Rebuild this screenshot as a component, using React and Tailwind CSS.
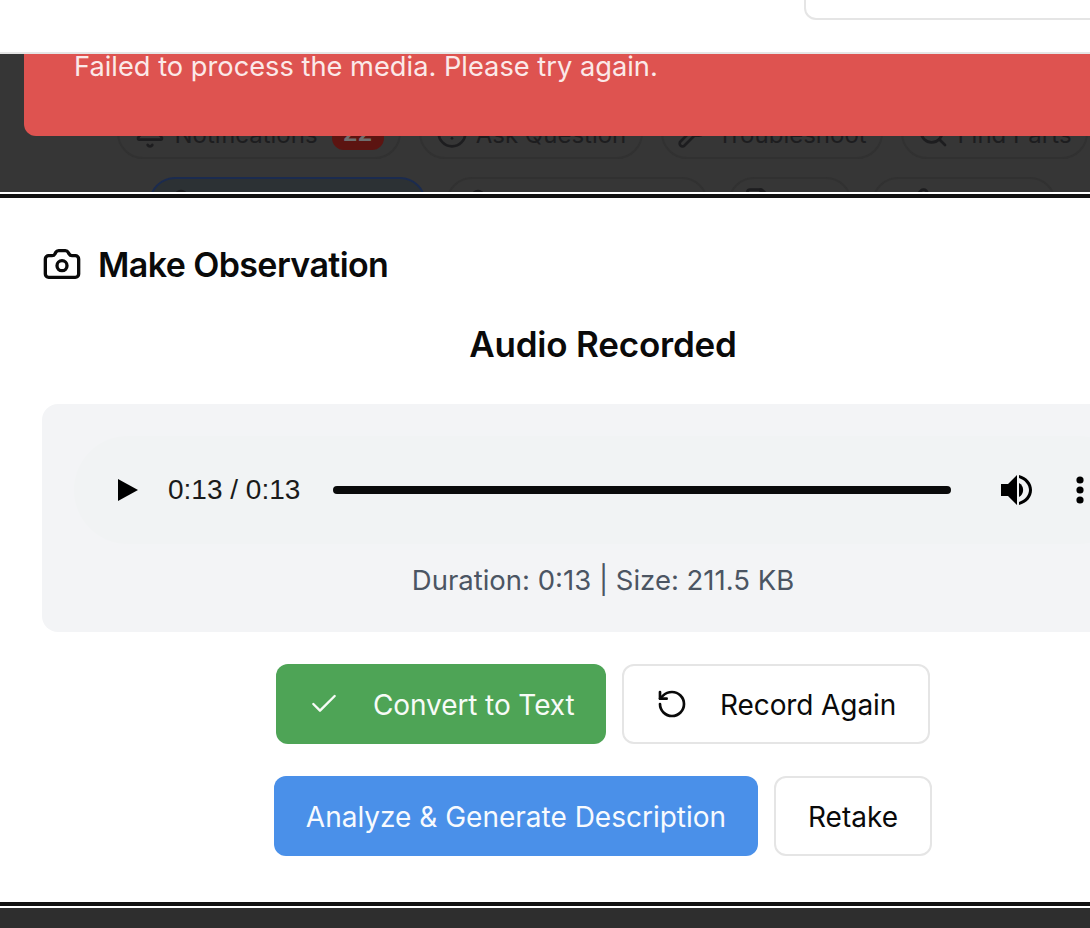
import React from "react";
import { Camera, Check, RotateCcw, Bell, CircleAlert, Wrench, Search, User, FileText, Pencil } from "lucide-react";

function Pill({ w, icon: Icon, label, badge }) {
  return (
    <div
      className="flex h-[52px] shrink-0 items-center justify-center gap-2 rounded-[26px] border-2 border-[#313131] bg-[#363636] text-[24px] text-[#1d1d1f]"
      style={{ width: w }}
    >
      <Icon size={32} strokeWidth={2} className="shrink-0" />
      <span className="mt-[4px] whitespace-nowrap">{label}</span>
      {badge && (
        <span className="ml-[6px] flex h-[34px] w-[52px] items-center justify-center rounded-[12px] bg-[#5c1411] text-[24px] font-semibold text-[#6e6e6e]">
          {badge}
        </span>
      )}
    </div>
  );
}

function IconPill({ w, icon: Icon, pad, blue }) {
  return (
    <div
      className={`flex h-[52px] shrink-0 items-center rounded-[26px] border-2 text-[#1d1d1f] ${
        blue ? "border-[#1b2b4f] bg-[#2c3134]" : "border-[#313131] bg-[#363636]"
      }`}
      style={{ width: w, paddingLeft: pad }}
    >
      <Icon size={32} strokeWidth={2} className="shrink-0" />
    </div>
  );
}

function OutlineButton({ className, children }) {
  return (
    <div className={`flex h-[80px] items-center justify-center rounded-[12px] border-2 border-[#e5e5e5] bg-white text-[#0a0a0a] ${className}`}>
      {children}
    </div>
  );
}

export default function App() {
  return (
    <div className="flex h-[928px] w-[1090px] flex-col overflow-hidden bg-white font-['Inter',sans-serif]">
      <div className="flex h-[52px] shrink-0 justify-end bg-white">
        <div className="h-[20px] w-[300px] shrink-0 translate-x-[14px] rounded-b-[12px] border-2 border-t-0 border-[#e5e5e5] bg-white" />
      </div>
      <div className="h-[2px] shrink-0 bg-[#e5e5e5]" />

      <div className="relative h-[138px] shrink-0 overflow-hidden bg-[#363636]">
        <div className="flex flex-col gap-[18px] pt-[53px]">
          <div className="flex gap-[18px] pl-[117px]">
            <Pill w={284} icon={Bell} label="Notifications" badge="22" />
            <Pill w={224} icon={CircleAlert} label="Ask Question" />
            <Pill w={222} icon={Wrench} label="Troubleshoot" />
            <Pill w={187} icon={Search} label="Find Parts" />
          </div>
          <div className="flex gap-[20px] pl-[149px]">
            <IconPill w={277} icon={User} pad={14} blue />
            <IconPill w={262} icon={User} pad={14} />
            <IconPill w={124} icon={FileText} pad={12} />
            <IconPill w={184} icon={Pencil} pad={24} />
          </div>
        </div>
        <div className="absolute left-[24px] right-[-40px] top-0 h-[82px] whitespace-nowrap rounded-bl-[12px] bg-[#de5350] pl-[50px] text-[27.25px] leading-[26px] text-[#fbe9e8]">
          Failed to process the media. Please try again.
        </div>
      </div>

      <div className="h-[2px] shrink-0 bg-white" />
      <div className="h-[4px] shrink-0 bg-[#111111]" />

      <div className="h-[704px] w-[1164px] shrink-0 bg-white pl-[42px] pt-[46px]">
        <div className="flex h-[40px] items-center gap-[16px] text-[#0a0a0a]">
          <Camera size={40} strokeWidth={2} />
          <span className="text-[34px] font-semibold tracking-[-0.6px]">Make Observation</span>
        </div>
        <div className="mt-[40px] flex h-[40px] items-center justify-center text-[35px] font-semibold tracking-[-0.2px] text-[#0a0a0a]">
          Audio Recorded
        </div>
        <div className="mt-[40px] flex h-[228px] flex-col items-center rounded-[16px] bg-[#f3f4f6] px-[32px] pt-[32px]">
          <div className="flex h-[108px] w-full items-center rounded-[54px] bg-[#f1f3f4] pl-[44px] font-['Liberation_Sans',sans-serif] text-[28px] text-[#1a1a1a]">
            <svg width="20" height="22" viewBox="0 0 20 22" className="shrink-0">
              <polygon points="0,0 20,11 0,22" fill="#000" />
            </svg>
            <span className="ml-[30px] w-[132px] shrink-0 whitespace-nowrap">0:13 / 0:13</span>
            <div className="ml-[33px] h-[8px] w-[618px] shrink-0 rounded-full bg-[#0a0a0a]" />
            <svg width="32" height="30" viewBox="0 0 32 30" className="ml-[50px] shrink-0">
              <path d="M0 9h7l9-9v30l-9-9H0z" fill="#000" />
              <path d="M18 8a8 8 0 0 1 0 14z" fill="#000" />
              <path d="M18 0c8 2 13 8 13 15s-5 13-13 15v-3c6-2 10-7 10-12s-4-10-10-12z" fill="#000" />
            </svg>
            <svg width="8" height="28" viewBox="0 0 8 28" className="ml-[43px] shrink-0">
              <circle cx="4" cy="4" r="3.6" fill="#000" />
              <circle cx="4" cy="14" r="3.6" fill="#000" />
              <circle cx="4" cy="24" r="3.6" fill="#000" />
            </svg>
          </div>
          <div className="mt-[20px] text-[27.5px] leading-[32px] text-[#4b5563]">Duration: 0:13 | Size: 211.5 KB</div>
        </div>
        <div className="mt-[32px] flex justify-center gap-[16px] text-[28px]">
          <div className="flex h-[80px] w-[330px] items-center rounded-[12px] bg-[#4ea456] pl-[32px] text-[#f7fbf7]">
            <Check size={32} strokeWidth={1.8} className="shrink-0" />
            <span className="ml-[33px] mt-[2px] tracking-[-0.1px]">Convert to Text</span>
          </div>
          <OutlineButton className="w-[308px] !justify-start pl-[32px]">
            <RotateCcw size={32} strokeWidth={2} className="shrink-0" />
            <span className="ml-[32px] mt-[2px] tracking-[-0.1px]">Record Again</span>
          </OutlineButton>
        </div>
        <div className="mt-[32px] flex justify-center gap-[16px] text-[28px]">
          <div className="flex h-[80px] w-[484px] items-center justify-center rounded-[12px] bg-[#4a90e9] pt-[2px] text-[#f7fafe]">
            Analyze &amp; Generate Description
          </div>
          <OutlineButton className="w-[158px] pt-[2px]">Retake</OutlineButton>
        </div>
      </div>

      <div className="h-[4px] shrink-0 bg-[#111111]" />
      <div className="h-[2px] shrink-0 bg-white" />
      <div className="flex-1 bg-[#2e2e2e]" />
    </div>
  );
}
